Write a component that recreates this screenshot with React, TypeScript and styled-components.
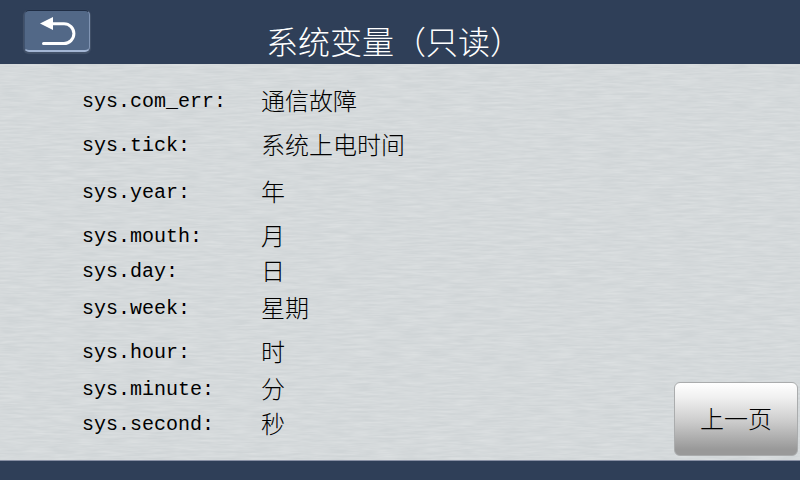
import React from "react";
import styled, { createGlobalStyle } from "styled-components";

const grain = encodeURIComponent(
  `<svg xmlns="http://www.w3.org/2000/svg" width="800" height="400"><filter id="g" x="0" y="0" width="100%" height="100%"><feTurbulence type="fractalNoise" baseFrequency="0.04 0.45" numOctaves="3" seed="4" stitchTiles="stitch"/><feColorMatrix values="0 0 0 0 1  0 0 0 0 1  0 0 0 0 1  0.4 0 0 0 -0.1"/></filter><rect width="800" height="400" filter="url(#g)"/></svg>`
);

const GlobalStyle = createGlobalStyle`
  * { box-sizing: border-box; }
  body {
    margin: 0;
    font-family: "Liberation Mono", "Noto Sans CJK SC", monospace;
    color: #000;
  }
`;

const Screen = styled.div`
  display: flex;
  flex-direction: column;
  min-height: 100vh;
  background: #d0d5d7 url("data:image/svg+xml,${grain}");
`;

const Header = styled.header`
  display: grid;
  grid-template-columns: 92px 1fr 104px;
  align-items: start;
  height: 64px;
  background: #2f3f58;
`;

const BackButton = styled.button`
  display: flex;
  width: 66px;
  height: 42px;
  margin: 10px 0 0 24px;
  padding: 0;
  border: 1px solid #40536f;
  border-top-color: #1f2d44;
  border-right-color: #8195b4;
  border-bottom: 2px solid #a3b6d4;
  border-radius: 5px;
  background: #526887;
  box-shadow: 0 1px 1px 1px #44536a;
  cursor: pointer;
`;

const Title = styled.h1`
  margin: 0;
  padding-top: 20px;
  font-family: "Noto Sans CJK SC", sans-serif;
  font-size: 32px;
  font-weight: 300;
  line-height: 40px;
  text-align: center;
  color: #fff;
`;

const Main = styled.main`
  display: flex;
  flex: 1;
  align-items: flex-end;
  justify-content: space-between;
  padding: 0 2px 4px 82px;
`;

const Variables = styled.dl`
  align-self: flex-start;
  margin: 0;
  padding-top: 24px;
`;

const Row = styled.div<{ $gap: number }>`
  display: grid;
  grid-template-columns: 179px auto;
  align-items: start;
  margin-bottom: ${(p) => p.$gap}px;
`;

const Name = styled.dt`
  font-size: 20px;
  line-height: 28px;
`;

const Meaning = styled.dd`
  margin: 0;
  font-family: "Noto Sans CJK SC", sans-serif;
  font-size: 24px;
  font-weight: 300;
  line-height: 24px;
`;

const PageButton = styled.button`
  width: 124px;
  height: 74px;
  padding: 0 0 4px;
  border: 1px solid #aaacad;
  border-radius: 6px;
  background: linear-gradient(#fff, #f0f0f0 20%, #cacaca 55%, #999 92%);
  font-family: "Noto Sans CJK SC", sans-serif;
  font-size: 24px;
  font-weight: 300;
  color: #000;
  cursor: pointer;
`;

const Footer = styled.footer`
  height: 20px;
  border-top: 1px solid #8890a4;
  background: #2f3f58;
`;

const variables = [
  { name: "sys.com_err:", meaning: "通信故障", gap: 16 },
  { name: "sys.tick:", meaning: "系统上电时间", gap: 19 },
  { name: "sys.year:", meaning: "年", gap: 16 },
  { name: "sys.mouth:", meaning: "月", gap: 7 },
  { name: "sys.day:", meaning: "日", gap: 9 },
  { name: "sys.week:", meaning: "星期", gap: 16 },
  { name: "sys.hour:", meaning: "时", gap: 9 },
  { name: "sys.minute:", meaning: "分", gap: 7 },
  { name: "sys.second:", meaning: "秒", gap: 0 },
];

function BackIcon() {
  return (
    <svg width="64" height="39" viewBox="25 11 64 39" aria-hidden="true">
      <path d="M40 23.5 L53 17 V30 Z" fill="#fff" />
      <path
        d="M51 23.7 H64 A9.8 9.8 0 0 1 64 43.5 H43.5"
        fill="none"
        stroke="#fff"
        strokeWidth="3"
        strokeLinecap="round"
      />
    </svg>
  );
}

export default function App() {
  return (
    <>
      <GlobalStyle />
      <Screen lang="zh-CN">
        <Header>
          <BackButton type="button" aria-label="返回">
            <BackIcon />
          </BackButton>
          <Title>系统变量（只读）</Title>
        </Header>
        <Main>
          <Variables>
            {variables.map((v) => (
              <Row key={v.name} $gap={v.gap}>
                <Name>{v.name}</Name>
                <Meaning>{v.meaning}</Meaning>
              </Row>
            ))}
          </Variables>
          <PageButton type="button">上一页</PageButton>
        </Main>
        <Footer />
      </Screen>
    </>
  );
}
